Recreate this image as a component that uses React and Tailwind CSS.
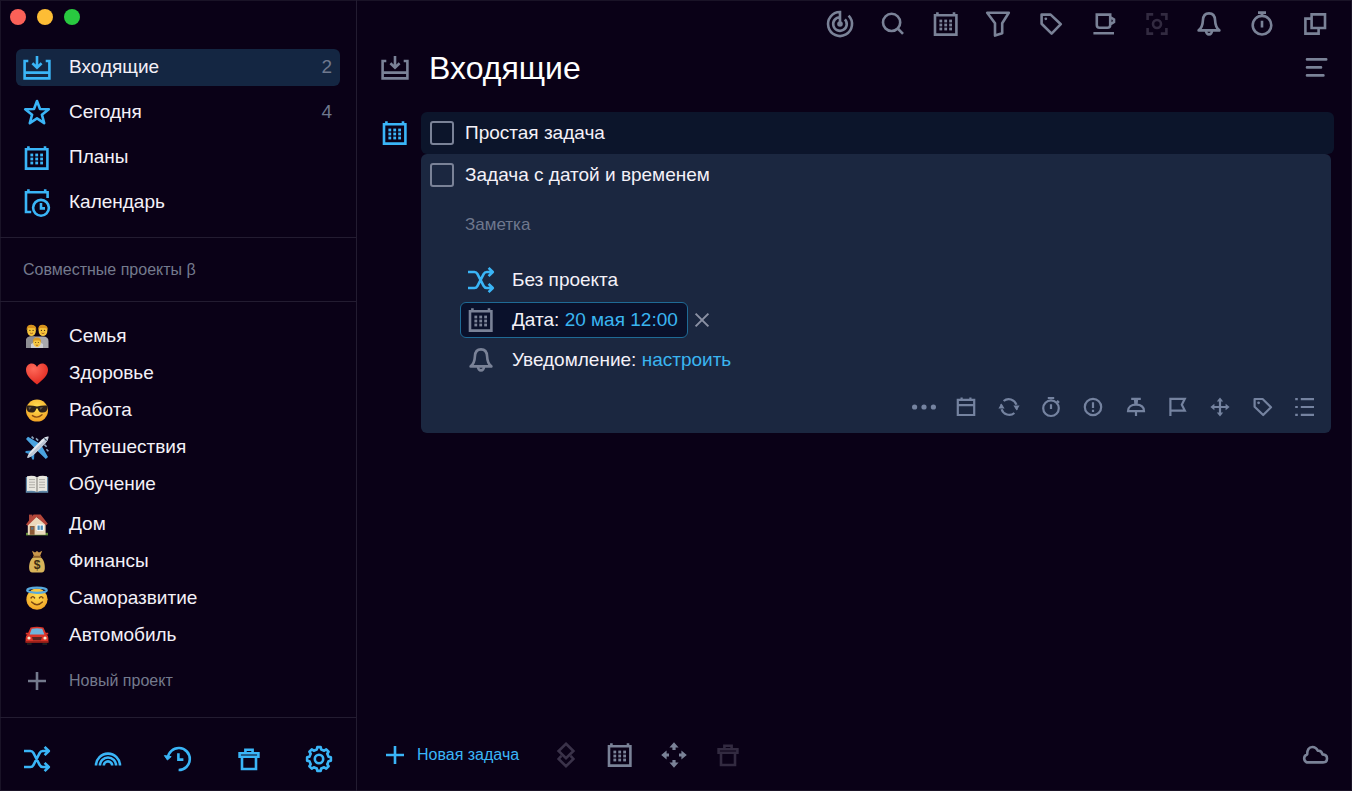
import React, { useState } from 'react';
import clsx from 'clsx';

const Icon = ({ children, size = 28, className }) => (
  <svg
    width={size}
    height={size}
    viewBox={`0 0 ${size} ${size}`}
    fill="none"
    stroke="currentColor"
    strokeWidth={size === 28 ? 2.6 : 2.2}
    className={clsx('shrink-0 overflow-visible', className)}
    aria-hidden="true"
  >
    {children}
  </svg>
);

/* ---------- large icons, 28px grid ---------- */

const InboxIcon = (props) => (
  <Icon {...props}>
    <path d="M5.3 7H1.6V24.4H26.4V7H22.7M1.6 18.6H26.4" />
    <path d="M14 2V13.4M9.4 9.2L14 13.6L18.6 9.2" />
  </Icon>
);

const StarIcon = (props) => (
  <Icon {...props}>
    <path
      strokeLinejoin="round"
      d="M14 2L17 10L25.8 10.2L18.9 15.7L21.2 24.2L14 19.4L6.8 24.2L9.1 15.7L2.2 10.2L11 10Z"
    />
  </Icon>
);

const CalendarIcon = (props) => (
  <Icon {...props}>
    <path d="M3 5.2H24.4V24.6H3ZM5.4 2.2V5M22 2.2V5" />
    <g fill="currentColor" stroke="none">
      {[9.6, 13.6, 17.6].map((y) =>
        [7.4, 12.3, 17.2].map((x) => <rect key={`${x}-${y}`} x={x} y={y} width="2.8" height="2.8" />)
      )}
    </g>
  </Icon>
);

const CalendarClockIcon = (props) => (
  <Icon {...props}>
    <path d="M8.2 23H3V3.2H24.6V9M5.4 0.2V3M22.2 0.2V3" />
    <circle cx="18" cy="18.8" r="7.9" />
    <path d="M18 14V19.4H22" />
  </Icon>
);

const ShuffleIcon = (props) => (
  <Icon {...props}>
    <path
      strokeLinejoin="round"
      d="M1 6H7.4Q9.4 6 10.4 7.9L16.6 19.9Q17.7 22 19.8 22H25.6M1 22H7.4Q9.4 22 10.4 20.1L16.6 8.1Q17.7 6 19.8 6H25.6M21.6 1.9L25.8 6L21.6 10.1M21.6 17.9L25.8 22L21.6 26.1"
    />
  </Icon>
);

const RainbowIcon = (props) => (
  <Icon {...props}>
    <path d="M2 20.6a12 12 0 0 1 24 0M5.9 20.6a8.1 8.1 0 0 1 16.2 0M9.8 20.6a4.2 4.2 0 0 1 8.4 0" />
  </Icon>
);

const HistoryIcon = (props) => (
  <Icon {...props}>
    <path d="M3.8 13.4A11 11 0 1 1 14.6 25M14.4 8.2V14.6H19.4" />
    <path fill="currentColor" strokeWidth="1" d="M0.4 10.6L3.4 15L7.2 11.6Z" />
  </Icon>
);

const TrashIcon = (props) => (
  <Icon {...props}>
    <path d="M4.6 8.2H23.4V11.8H4.6ZM7 11.8V24H21V11.8M10.4 8.2V4.8H17.6V8.2" />
  </Icon>
);

// eight rounded teeth around the hub
const gearPath = (() => {
  const points = [];
  for (let i = 0; i < 8; i++) {
    [[-13, 9.8], [-8, 12], [8, 12], [13, 9.8]].forEach(([shift, r]) => {
      const a = ((i * 45 - 90 + shift) * Math.PI) / 180;
      points.push(`${(14 + r * Math.cos(a)).toFixed(2)} ${(14 + r * Math.sin(a)).toFixed(2)}`);
    });
  }
  return `M${points.join('L')}Z`;
})();

const GearIcon = (props) => (
  <Icon {...props}>
    <path strokeLinejoin="round" d={gearPath} />
    <circle cx="14" cy="14" r="4.2" />
  </Icon>
);

const RadarIcon = (props) => (
  <Icon {...props}>
    <path d="M14 14V2A12 12 0 1 0 22.6 5.6M14 7.2A6.8 6.8 0 1 0 18.9 9.3" />
    <circle cx="14" cy="14" r="2.8" fill="currentColor" stroke="none" />
  </Icon>
);

const SearchIcon = (props) => (
  <Icon {...props}>
    <circle cx="12.6" cy="12.4" r="8.6" />
    <path d="M18.7 18.5L24 23.8" />
  </Icon>
);

const FunnelIcon = (props) => (
  <Icon {...props}>
    <path strokeLinejoin="round" d="M3.2 2.8H24.8L18.2 13.2V23.2L11 25.6V13.2Z" />
  </Icon>
);

const TagIcon = (props) => (
  <Icon {...props}>
    <path strokeLinejoin="round" d="M4.6 4.6H13.6L23.8 14.2L14.6 23.6L4.6 13.8Z" />
    <circle cx="8.8" cy="8.8" r="1.4" fill="currentColor" stroke="none" />
  </Icon>
);

const CupIcon = (props) => (
  <Icon {...props}>
    <path d="M6.8 4.6H20.2V15Q20.2 17.8 17.4 17.8H9.6Q6.8 17.8 6.8 15ZM20.2 7L24 9.4V12L20.2 14.4M3.4 23.2H24" />
  </Icon>
);

const FocusIcon = (props) => (
  <Icon {...props}>
    <path d="M4.6 10V4.4H10.2M17.8 4.4H23.4V10M23.4 18V23.6H17.8M10.2 23.6H4.6V18" />
    <circle cx="14" cy="14" r="4" />
  </Icon>
);

const BellIcon = (props) => (
  <Icon {...props}>
    <path
      strokeLinejoin="round"
      d="M3.6 20.4C6.4 18.4 7.7 15.4 7.9 10.4C8.1 5.8 10.2 3.4 14 3.4S19.9 5.8 20.1 10.4C20.3 15.4 21.6 18.4 24.4 20.4Z"
    />
    <path d="M11 20.8a3 3.6 0 0 0 6 0" />
  </Icon>
);

const StopwatchIcon = (props) => (
  <Icon {...props}>
    <circle cx="14" cy="15.2" r="9.3" />
    <path d="M10 2.6H18M14 2.6V5.8M14 10.8V17.4" />
  </Icon>
);

const WindowsIcon = (props) => (
  <Icon {...props}>
    <path d="M10.6 4.4H24V18H10.6ZM10.6 8.6H4.4V23.6H17.6V18" />
  </Icon>
);

const LinesIcon = (props) => (
  <Icon {...props}>
    <path strokeLinecap="round" d="M5 5.4H24.2M5 13.4H19M5 21.4H21.4" />
  </Icon>
);

const PlusIcon = (props) => (
  <Icon {...props}>
    <path d="M14 5V23M5 14H23" />
  </Icon>
);

const LayersIcon = (props) => (
  <Icon {...props}>
    <path d="M14 2.8L21.4 10L14 17.2L6.6 10ZM9.4 14.8L6.6 18L14 25.2L21.4 18L18.6 14.8" />
  </Icon>
);

const SpreadIcon = (props) => (
  <Icon {...props}>
    <path d="M14 4V9M14 19V24M4 14H9M19 14H24" strokeWidth="3.2" />
    <path
      fill="currentColor"
      stroke="none"
      d="M14 1.2L18.6 6.6H9.4ZM14 26.8L18.6 21.4H9.4ZM1.2 14L6.6 9.4V18.6ZM26.8 14L21.4 9.4V18.6Z"
    />
  </Icon>
);

const CloudIcon = (props) => (
  <Icon {...props}>
    <path
      strokeLinejoin="round"
      d="M6 21.4A4.2 4.2 0 0 1 6.2 13.4C6 8.8 8 6 11.4 6C14 6 15.8 7.6 16.8 9.8C19.6 9.4 21 11 21.4 13.4C24.4 13.6 26 15.4 26 17.4C26 19.8 24.4 21.4 22 21.4Z"
    />
  </Icon>
);

/* ---------- small icons, 24px grid ---------- */

const DotsIcon = () => (
  <Icon size={24}>
    <g fill="currentColor" stroke="none">
      <circle cx="2.6" cy="12" r="2.6" />
      <circle cx="12" cy="12" r="2.6" />
      <circle cx="21.4" cy="12" r="2.6" />
    </g>
  </Icon>
);

const DayIcon = () => (
  <Icon size={24}>
    <path d="M3.8 4.8H20.2V20H3.8ZM3.8 10.2H20.2M7.6 2.6V4.8M16.4 2.6V4.8" />
  </Icon>
);

const RepeatIcon = () => (
  <Icon size={24}>
    <path d="M4.6 14.2A8 8 0 0 0 17.4 18M6.6 6A8 8 0 0 1 19.4 9.8" />
    <path d="M4.2 10.6A8 8 0 0 1 4.4 9.6M19.8 13.4A8 8 0 0 1 19.6 14.4" />
    <path fill="currentColor" stroke="none" d="M1.4 13.4L4.4 8.6L7.6 13.4ZM16.4 10.6H22.6L19.6 15.4Z" />
  </Icon>
);

const TimerIcon = () => (
  <Icon size={24}>
    <circle cx="12" cy="13.2" r="7.8" />
    <path d="M8.8 3H15.2M12 9.2V14M18 5.8L20 7.8" />
  </Icon>
);

const AlertIcon = () => (
  <Icon size={24}>
    <circle cx="12" cy="12" r="8.2" />
    <path d="M12 7.2V13M12 14.8V17" />
  </Icon>
);

const PinIcon = () => (
  <Icon size={24}>
    <path d="M7.2 3.8H16.8M12 16.2V21" />
    <path d="M4 16.2C4 11.8 7.2 9.6 12 9.6S20 11.8 20 16.2Z" />
    <path fill="currentColor" stroke="none" d="M9.8 4H14.2L13.6 9.8H10.4Z" />
  </Icon>
);

const FlagIcon = () => (
  <Icon size={24}>
    <path d="M4.4 21V3.8H18.8L15.8 9.8L18.8 15.6H4.4" />
  </Icon>
);

const MoveIcon = () => (
  <Icon size={24}>
    <path d="M12 4V20M4 12H20" />
    <path
      fill="currentColor"
      stroke="none"
      d="M12 2.4L15.2 6.4H8.8ZM12 21.6L15.2 17.6H8.8ZM2.4 12L6.4 8.8V15.2ZM21.6 12L17.6 8.8V15.2Z"
    />
  </Icon>
);

const SmallTagIcon = () => (
  <Icon size={24}>
    <path strokeLinejoin="round" d="M3.6 4H11.6L20 12.2L12.2 20L3.6 11.8Z" />
    <circle cx="7.6" cy="7.8" r="1.4" fill="currentColor" stroke="none" />
  </Icon>
);

const ListIcon = () => (
  <Icon size={24}>
    <path d="M2.2 4.2H4.8M7.8 4.2H21M2.2 12H4.8M7.8 12H21M2.2 19.8H4.8M7.8 19.8H21" />
  </Icon>
);

const CloseIcon = () => (
  <Icon>
    <path d="M7.6 7.6L20.4 20.4M20.4 7.6L7.6 20.4" strokeWidth="2" />
  </Icon>
);

/* ---------- project pictures ---------- */

const Picture = ({ children }) => (
  <svg width="28" height="28" viewBox="0 0 28 28" className="shrink-0" aria-hidden="true">
    {children}
  </svg>
);

const Family = () => (
  <Picture>
    <path d="M3 25V18Q3 13.5 8 13.5H20Q25.5 13.5 25.5 18V25Z" fill="#a9a9ad" />
    <path d="M3 25V18Q3 13.5 8 13.5H12L9 25Z" fill="#8d8d92" />
    <ellipse cx="8.5" cy="7.5" rx="4.4" ry="5.6" fill="#f5c33b" />
    <ellipse cx="20" cy="7.5" rx="4.4" ry="5.6" fill="#f5c33b" />
    <path d="M3.6 7Q3.4 1.6 8.5 1.8T13.3 7L11.8 5.2L5.4 5ZM15.2 7Q15 1.6 20 1.8T24.8 7L23.2 5.2L17 5Z" fill="#d6921d" />
    <path d="M8 25V21Q14 17 20 21V25Z" fill="#cfcfd2" />
    <ellipse cx="14" cy="19.6" rx="3.8" ry="4.6" fill="#f7c843" />
    <path d="M9.8 19.4Q9.8 14.6 14 14.6T18.2 19.4L16.4 17.4L11.6 17.4Z" fill="#d99a24" />
    <g fill="#4a3210">
      <circle cx="6.9" cy="7.4" r=".6" /><circle cx="10.1" cy="7.4" r=".6" />
      <circle cx="18.4" cy="7.4" r=".6" /><circle cx="21.6" cy="7.4" r=".6" />
      <circle cx="12.7" cy="19.6" r=".5" /><circle cx="15.3" cy="19.6" r=".5" />
    </g>
    <path d="M7 10Q8.5 11.2 10 10M18.5 10Q20 11.2 21.5 10M12.8 22Q14 22.9 15.2 22" stroke="#a0521c" strokeWidth=".8" fill="none" />
  </Picture>
);

const Heart = () => (
  <Picture>
    <defs>
      <radialGradient id="heart" cx=".35" cy=".25" r=".8">
        <stop offset="0" stopColor="#ff6a5a" />
        <stop offset="1" stopColor="#e0261d" />
      </radialGradient>
    </defs>
    <path d="M14 24.4C7 19.2 3 14.8 3 9.8C3 6 5.6 3.4 8.8 3.4C11.2 3.4 13 4.6 14 7C15 4.6 16.8 3.4 19.2 3.4C22.4 3.4 25 6 25 9.8C25 14.8 21 19.2 14 24.4Z" fill="url(#heart)" />
  </Picture>
);

const FaceGradient = ({ id }) => (
  <defs>
    <radialGradient id={id} cx=".5" cy=".35" r=".65">
      <stop offset="0" stopColor="#ffe154" />
      <stop offset="1" stopColor="#f2a324" />
    </radialGradient>
  </defs>
);

const Sunglasses = () => (
  <Picture>
    <FaceGradient id="cool" />
    <circle cx="14" cy="13.6" r="11" fill="url(#cool)" />
    <path d="M3.4 8.6Q8.6 8 14 9.6Q19.4 8 24.6 8.6V11Q24 15.6 19.6 15.6Q15.8 15.6 14.6 11.4H13.4Q12.2 15.6 8.4 15.6Q4 15.6 3.4 11Z" fill="#2b2018" />
    <path d="M5.4 10.2L8.6 10L6.4 13ZM16.6 10.4L20 10L17.6 13Z" fill="#5d5346" />
    <path d="M9.4 18.6Q14.4 22 19 17.8" stroke="#8a4b12" strokeWidth="1.4" fill="none" strokeLinecap="round" />
  </Picture>
);

const Plane = () => (
  <Picture>
    <path d="M16.5 9.5L5 2.8L3 5L12 14.5ZM18.5 11.5L25 23L22.8 25L13.5 16Z" fill="#4aa3e0" />
    <path d="M8.2 16.6L2.6 17L2.4 18.8L7.6 20.4ZM11.4 19.8L11 25.4L9.2 25.6L7.6 20.4Z" fill="#3b93d4" />
    <path d="M4.2 23.8Q4.6 20.4 8.6 16L18.8 5.6Q22.4 2.2 25.4 2.6Q25.8 5.6 22.4 9.2L12 19.4Q7.6 23.4 4.2 23.8Z" fill="#e3e8ef" />
    <path d="M4.2 23.8Q7.6 23.4 12 19.4L22.4 9.2Q25.6 6 25.4 2.6L5.4 21.8Z" fill="#bcc6d5" />
    <path d="M13 4.4L15.2 6.6M8.6 2.6L10.6 4.6M23.6 12.8L21.4 10.6M25.4 17.2L23.4 15.2" stroke="#8ea5bd" strokeWidth="1.6" />
    <path d="M21.4 4.4L23.6 6.6" stroke="#33475d" strokeWidth="1.2" />
  </Picture>
);

const Book = () => (
  <Picture>
    <path d="M2.8 6H25.2V21.8H2.8Z" fill="#5e86a6" />
    <path d="M4 5.2Q10.6 4 14 6.2Q17.4 4 24 5.2V20Q17.4 19 14 21Q10.6 19 4 20Z" fill="#e9e7df" />
    <path d="M14 6.2V21" stroke="#8d8b84" strokeWidth="1.2" />
    <path d="M6 8.6H12M6 11.2H12M6 13.8H12M6 16.4H12M16 8.6H22M16 11.2H22M16 13.8H22M16 16.4H22" stroke="#a8a7a2" strokeWidth=".9" />
  </Picture>
);

const House = () => (
  <Picture>
    <path d="M3 21.8H25V24.4H3Z" fill="#5e8c35" />
    <path d="M6 3.6H9.4V10H6Z" fill="#a8453a" />
    <path d="M4.8 12.6L12 5L22.6 12.6V23.8H4.8Z" fill="#ecd9bd" />
    <path d="M3 13.4L10.6 3.6H17.6L24.8 12.8L23 14.2L13.6 6L4.6 14.8Z" fill="#b5473a" />
    <path d="M6.8 15H11.6V23.8H6.8Z" fill="#8d5a35" />
    <path d="M8 16.2H10.4V18.6H8Z" fill="#5b7487" />
    <path d="M14 14H20.4V19.4H14Z" fill="#4f8fb8" stroke="#fff" strokeWidth="1" />
    <path d="M17.2 14V19.4" stroke="#fff" strokeWidth=".8" />
  </Picture>
);

const MoneyBag = () => (
  <Picture>
    <path d="M9 2.8L12 4.6L14 3L16 4.6L19.2 2.8L17 8.2H11Z" fill="#c9964b" />
    <path d="M11 8.8C7 11.4 5.8 16.4 6.2 20.8Q6.4 24.4 9.4 24.4H18.6Q21.6 24.4 21.8 20.8C22.2 16.4 21 11.4 17 8.8Z" fill="#d8b45a" />
    <path d="M10 7.8H18V9.8H10Z" fill="#8d5f2a" />
    <text x="14" y="21" textAnchor="middle" fontSize="12" fontWeight="bold" fontFamily="Liberation Sans" fill="#3a2c12">$</text>
  </Picture>
);

const Angel = () => (
  <Picture>
    <FaceGradient id="angel" />
    <circle cx="14" cy="14.2" r="10.6" fill="url(#angel)" />
    <ellipse cx="14" cy="5.2" rx="9.8" ry="2.6" fill="none" stroke="#58a9dd" strokeWidth="2.2" />
    <path d="M8 13Q9.8 10.2 11.6 13M16.4 13Q18.2 10.2 20 13M8.6 17Q14 22.4 19.4 17" stroke="#7a4512" strokeWidth="1.4" fill="none" strokeLinecap="round" />
  </Picture>
);

const Car = () => (
  <Picture>
    <path d="M4 19.6H8.6V23H4ZM19.4 19.6H24V23H19.4Z" fill="#1d1c20" />
    <path d="M7.6 5.4Q14 4 20.4 5.4L23.6 12.6Q25.4 13.8 25.4 16.4V20.4H2.6V16.4Q2.6 13.8 4.4 12.6Z" fill="#dc3428" />
    <path d="M8.8 6.8Q14 5.8 19.2 6.8L21.4 12.4H6.6Z" fill="#6fb4dd" />
    <path d="M2.8 10.8H5.2V12.6H2.8ZM22.8 10.8H25.2V12.6H22.8Z" fill="#dc3428" />
    <path d="M9 15H19L18 18.2H10Z" fill="#5a2320" />
    <circle cx="6" cy="16" r="1.6" fill="#f5ecd2" />
    <circle cx="22" cy="16" r="1.6" fill="#f5ecd2" />
    <path d="M2.6 19.2H25.4V20.8H2.6Z" fill="#8f1d17" />
  </Picture>
);

const navItems = [
  { id: 'inbox', label: 'Входящие', icon: InboxIcon, count: 2 },
  { id: 'today', label: 'Сегодня', icon: StarIcon, count: 4 },
  { id: 'plans', label: 'Планы', icon: CalendarIcon },
  { id: 'calendar', label: 'Календарь', icon: CalendarClockIcon },
];

const projectGroups = [
  [
    { label: 'Семья', icon: Family },
    { label: 'Здоровье', icon: Heart },
    { label: 'Работа', icon: Sunglasses },
    { label: 'Путешествия', icon: Plane },
    { label: 'Обучение', icon: Book },
  ],
  [
    { label: 'Дом', icon: House },
    { label: 'Финансы', icon: MoneyBag },
    { label: 'Саморазвитие', icon: Angel },
    { label: 'Автомобиль', icon: Car },
  ],
];

const sidebarTools = [ShuffleIcon, RainbowIcon, HistoryIcon, TrashIcon, GearIcon];

const toolbar = [
  { icon: RadarIcon },
  { icon: SearchIcon },
  { icon: CalendarIcon },
  { icon: FunnelIcon },
  { icon: TagIcon },
  { icon: CupIcon },
  { icon: FocusIcon, disabled: true },
  { icon: BellIcon },
  { icon: StopwatchIcon },
  { icon: WindowsIcon },
];

const taskTools = [
  DotsIcon,
  DayIcon,
  RepeatIcon,
  TimerIcon,
  AlertIcon,
  PinIcon,
  FlagIcon,
  MoveIcon,
  SmallTagIcon,
  ListIcon,
];

const Sidebar = () => {
  const [active, setActive] = useState('inbox');

  return (
    <aside className="flex w-[357px] shrink-0 flex-col border-r border-[#231c31]">
      <div className="flex gap-[11px] pt-[9px] pl-[10px]">
        <span className="size-4 rounded-full bg-[#fb6158]" />
        <span className="size-4 rounded-full bg-[#fdbd35]" />
        <span className="size-4 rounded-full bg-[#29c940]" />
      </div>

      <nav className="mt-6 flex flex-col gap-2 px-4">
        {navItems.map(({ id, label, icon: NavIcon, count }) => (
          <button
            key={id}
            onClick={() => setActive(id)}
            className={clsx(
              'flex h-[37px] items-center gap-[18px] rounded-md pr-2 pl-[7px]',
              active === id && 'bg-[#142642]'
            )}
          >
            <NavIcon className="text-[#3ab5f7]" />
            <span>{label}</span>
            {count && <span className="ml-auto text-[#6f788e]">{count}</span>}
          </button>
        ))}
      </nav>

      <div className="mt-4 border-y border-[#231c31] px-[23px] pt-5 pb-[19px]">
        <button className="block text-base text-[#747a8d]">Совместные проекты β</button>
      </div>

      <div className="flex flex-col gap-[3px] pt-4 pl-[23px]">
        {projectGroups.map((group, i) => (
          <ul key={i}>
            {group.map(({ label, icon: ProjectIcon }) => (
              <li key={label}>
                <a href="#" className="flex h-[37px] items-center gap-[18px]">
                  <ProjectIcon />
                  {label}
                </a>
              </li>
            ))}
          </ul>
        ))}
      </div>

      <button className="mt-2 mb-[18px] ml-[23px] flex h-[37px] items-center gap-[18px] text-base text-[#747a8d]">
        <PlusIcon />
        Новый проект
      </button>

      <div className="mt-auto flex justify-between border-t border-[#231c31] px-[23px] pt-[27px] pb-[18px] text-[#3ab5f7]">
        {sidebarTools.map((ToolIcon, i) => (
          <button key={i}>
            <ToolIcon />
          </button>
        ))}
      </div>
    </aside>
  );
};

const TaskTitle = ({ children }) => (
  <label className="flex h-[42px] items-center gap-[11px] pl-[9px]">
    <input
      type="checkbox"
      className="size-6 shrink-0 appearance-none rounded-[3px] border-2 border-[#7a8297] checked:bg-[#3ab5f7]"
    />
    {children}
  </label>
);

const TaskDetails = () => (
  <div className="mr-[3px] rounded-md bg-[#1b2740] pb-[14px]">
    <TaskTitle>Задача с датой и временем</TaskTitle>

    <input
      type="text"
      aria-label="Заметка"
      placeholder="Заметка"
      className="mt-[15px] ml-11 block h-7 w-1/2 bg-transparent text-[17px] outline-none placeholder:text-[#6f788e]"
    />

    <div className="mt-[23px] ml-[39px] flex flex-col items-start gap-1">
      <button className="flex h-9 items-center gap-[17px] px-[7px]">
        <ShuffleIcon className="text-[#3ab5f7]" />
        Без проекта
      </button>
      <div className="flex items-center">
        <button className="flex h-9 items-center gap-[17px] rounded-md border border-[#1f6a95] bg-[#0a112b] pr-[9px] pl-[6px]">
          <CalendarIcon className="text-[#7a8297]" />
          <span>
            Дата: <span className="text-[#3ab5f0]">20 мая 12:00</span>
          </span>
        </button>
        <button className="text-[#8a90a3]" aria-label="Убрать дату">
          <CloseIcon />
        </button>
      </div>
      <button className="flex h-9 items-center gap-[17px] px-[7px]">
        <BellIcon className="text-[#7a8297]" />
        <span>
          Уведомление: <span className="text-[#3ab5f0]">настроить</span>
        </span>
      </button>
    </div>

    <div className="mt-[17px] mr-[14px] ml-auto flex w-[405px] justify-between text-[#7583a0]">
      {taskTools.map((ToolIcon, i) => (
        <button key={i}>
          <ToolIcon />
        </button>
      ))}
    </div>
  </div>
);

const App = () => (
  <div className="flex min-h-screen bg-[#0a0117] font-['Liberation_Sans',Arial,sans-serif] text-[19px] text-[#f4f1f8] ring-1 ring-[#1a1327] ring-inset">
    <Sidebar />

    <main className="flex min-w-0 flex-1 flex-col">
      <div className="flex w-[526px] justify-between self-end pt-[10px] pr-[23px] text-[#7a8297]">
        {toolbar.map(({ icon: ToolIcon, disabled }, i) => (
          <button key={i} disabled={disabled} className="disabled:text-[#322a40]">
            <ToolIcon />
          </button>
        ))}
      </div>

      <header className="mt-[10px] flex h-10 items-center gap-5 pr-[22px] pl-6">
        <InboxIcon className="text-[#7a8297]" />
        <h1 className="text-[32px] text-white">Входящие</h1>
        <button className="ml-auto text-[#7a8297]" aria-label="Меню">
          <LinesIcon />
        </button>
      </header>

      <section className="mt-6 flex gap-3 pr-[18px] pl-6">
        <div className="flex h-[42px] items-center">
          <CalendarIcon className="text-[#3ab5f7]" />
        </div>
        <div className="flex-1">
          <div className="rounded-md bg-[#0c152b]">
            <TaskTitle>Простая задача</TaskTitle>
          </div>
          <TaskDetails />
        </div>
      </section>

      <footer className="mt-auto flex items-center pr-[23px] pb-[22px] pl-6 text-[#7a8297]">
        <button className="flex items-center gap-2 text-base text-[#3ab5f7]">
          <PlusIcon />
          Новая задача
        </button>
        <div className="ml-[33px] flex gap-[26px]">
          <button disabled className="disabled:text-[#3a3249]">
            <LayersIcon />
          </button>
          <button>
            <CalendarIcon />
          </button>
          <button>
            <SpreadIcon />
          </button>
          <button disabled className="disabled:text-[#322a40]">
            <TrashIcon />
          </button>
        </div>
        <button className="ml-auto">
          <CloudIcon />
        </button>
      </footer>
    </main>
  </div>
);

export default App;
